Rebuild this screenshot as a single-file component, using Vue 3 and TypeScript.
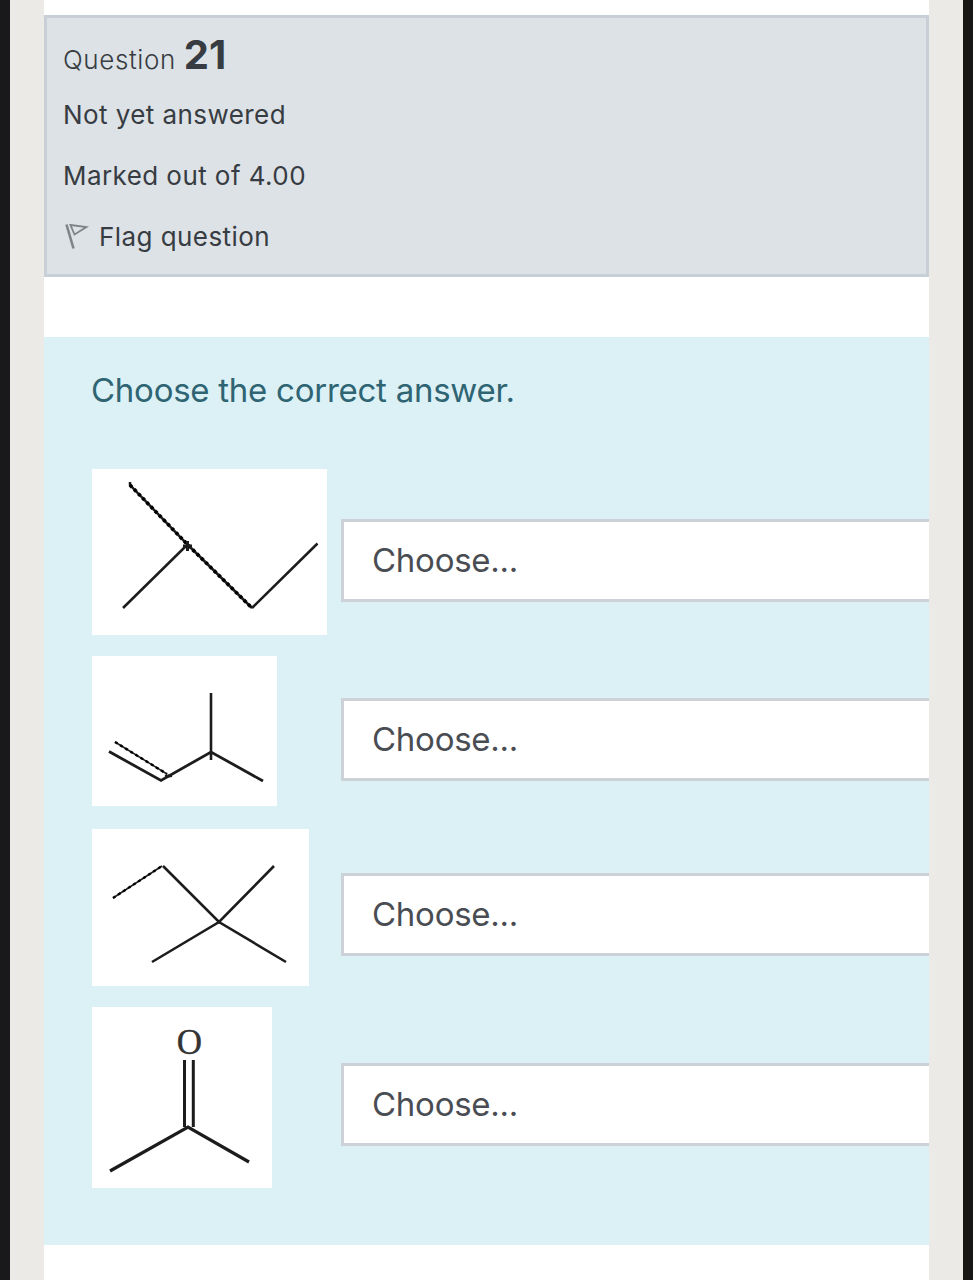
<script setup lang="ts">
interface Stroke {
  d: string
  w: number
  rough?: boolean
}
interface Row {
  id: string
  width: number
  height: number
  strokes: Stroke[]
  atom?: { x: number; y: number; text: string }
}

const rows: Row[] = [
  {
    id: 'methylbutane',
    width: 235,
    height: 166,
    strokes: [
      { d: 'M38 13V16L96 76L160 139', w: 2.5 },
      { d: 'M38 16L96 76L160 139', w: 3.6, rough: true },
      { d: 'M31 139L94 77', w: 2.5 },
      { d: 'M160 139L225.500 74.500', w: 2.5 },
      { d: 'M95.500 72V82M91 77L100 77', w: 3 },
    ],
  },
  {
    id: 'methylbutene',
    width: 185,
    height: 150,
    strokes: [
      { d: 'M17 95.5L69 124.5L119 96L171 125', w: 2.8 },
      { d: 'M119 37V104', w: 2.6 },
      { d: 'M23 86L75 118', w: 1.5 },
      { d: 'M23 86L75 118', w: 2.4, rough: true },
      { d: 'M73 120.5L80 119.5', w: 3.2 },
    ],
  },
  {
    id: 'dimethylbutane',
    width: 217,
    height: 157,
    strokes: [
      { d: 'M21 69L70 37', w: 1.5 },
      { d: 'M21 69L70 37', w: 2.3, rough: true },
      { d: 'M71 37L127 93L194 133', w: 2.6 },
      { d: 'M182 37L127 93L60 133', w: 2.6 },
      { d: 'M125 93H129', w: 3 },
    ],
  },
  {
    id: 'acetone',
    width: 180,
    height: 181,
    strokes: [
      { d: 'M92.5 53V120M101.3 53V120', w: 3 },
      { d: 'M18 164L96 120L157 155', w: 3.2 },
    ],
    atom: { x: 97.5, y: 46.5, text: 'O' },
  },
]
</script>

<template>
  <main class="device">
    <div class="page">
      <section class="info">
        <h3 class="number">Question <b>21</b></h3>
        <p class="state">Not yet answered</p>
        <p class="grade">Marked out of 4.00</p>
        <div class="flag">
          <svg width="26" height="30" viewBox="0 0 26 30" fill="none" stroke="#808489">
            <path d="M3.500 3.500L10.500 27.500" stroke-width="2.600" />
            <path d="M7.500 4L23.500 6L11.500 13.500Z" stroke-width="1.800" />
          </svg>
          <span>Flag question</span>
        </div>
      </section>
      <section class="question">
        <h4 class="prompt">Choose the correct answer.</h4>
        <div class="answers">
          <div v-for="row in rows" :key="row.id" class="answer" :class="row.id">
            <div class="structure">
              <svg :width="row.width" :height="row.height" :viewBox="`0 0 ${row.width} ${row.height}`">
                <path
                  v-for="(s, i) in row.strokes"
                  :key="i"
                  :d="s.d"
                  :stroke-width="s.w"
                  :class="{ rough: s.rough }"
                />
                <text v-if="row.atom" :x="row.atom.x" :y="row.atom.y">{{ row.atom.text }}</text>
              </svg>
            </div>
            <div class="select" role="combobox" tabindex="0"><span>Choose...</span></div>
          </div>
        </div>
      </section>
    </div>
  </main>
</template>

<style>
body {
  margin: 0;
}
</style>

<style scoped>
* {
  box-sizing: border-box;
}
.device {
  height: 1280px;
  display: flex;
  overflow: hidden;
  background: #ebeae6;
  border-left: 10px solid #19191b;
  border-right: 10px solid #171716;
  padding: 0 34px;
  font-family: Inter, "Liberation Sans", sans-serif;
}
.page {
  flex: 1;
  min-width: 0;
  background: #fff;
  padding-top: 14.5px;
  overflow: hidden;
}
.info {
  height: 262px;
  border: 3px solid #c8cfd6;
  background: #dde2e6;
  padding: 14px 16px 0;
  color: #373c42;
  font-size: 26px;
  letter-spacing: 0.43px;
}
.number {
  margin: 0;
  height: 52px;
  line-height: 46px;
  font-size: 26px;
  font-weight: 300;
  letter-spacing: 0.6px;
  white-space: nowrap;
}
.number b {
  font-size: 40px;
  font-weight: 700;
  letter-spacing: 0;
}
.state,
.grade {
  margin: 0;
  height: 61px;
  line-height: 61px;
}
.flag {
  display: flex;
  align-items: center;
  height: 61px;
  gap: 10px;
}
.question {
  margin-top: 60px;
  height: 908.5px;
  background: #dcf1f6;
  padding: 30px 0 0 48px;
  overflow: hidden;
}
.prompt {
  margin: 0 0 0 -1px;
  height: 46px;
  line-height: 46px;
  font-size: 33px;
  font-weight: 400;
  letter-spacing: -0.26px;
  color: #2f6473;
  white-space: nowrap;
}
.answers {
  margin-top: 56.5px;
}
.answer {
  display: grid;
  grid-template-columns: 249px 1fr;
  align-items: start;
  margin-bottom: 21px;
}
.methylbutene {
  margin-bottom: 23px;
}
.structure {
  display: flex;
}
.structure svg {
  background: #fff;
  fill: none;
  stroke: #1c1c1c;
}
.rough {
  stroke: #000;
  stroke-dasharray: 3 3;
}
.structure text {
  fill: #333;
  stroke: #333;
  stroke-width: 0.4px;
  font: 35px "Liberation Serif", serif;
  text-anchor: middle;
}
.select {
  display: flex;
  align-items: center;
  height: 83px;
  margin-top: 50px;
  padding: 0 0 2px 28px;
  border: 3px solid #cdd2d9;
  border-right: 0;
  background: #fff;
  color: #494d53;
  font-size: 33px;
  letter-spacing: -0.25px;
}
.methylbutene .select {
  margin-top: 42px;
}
.dimethylbutane .select {
  margin-top: 44px;
}
.acetone .select {
  margin-top: 56px;
}
</style>
